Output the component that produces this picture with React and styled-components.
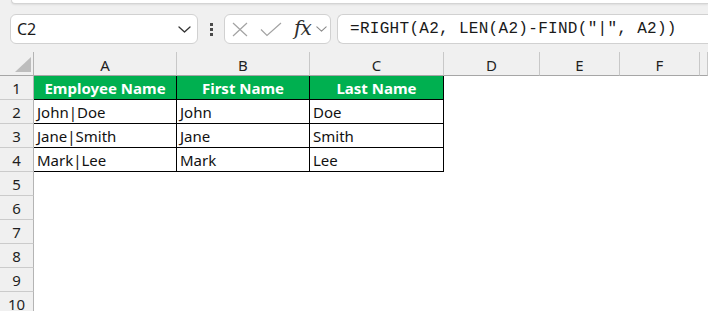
import React from 'react';
import styled, { createGlobalStyle } from 'styled-components';

const GlobalStyle = createGlobalStyle`
  html, body {
    margin: 0;
    padding: 0;
    background: #ffffff;
    overflow: hidden;
  }
  body {
    font-family: "Noto Sans", "Liberation Sans", sans-serif;
    color: #1f1f1f;
  }
`;

const Window = styled.div`
  width: 708px;
  height: 311px;
  overflow: hidden;
  display: flex;
  flex-direction: column;
  background: #ffffff;
`;

// Toolbar with name box and formula bar
const Toolbar = styled.div`
  height: 52px;
  flex-shrink: 0;
  background: #f0f0f0;
  display: flex;
  flex-direction: column;
`;

const RibbonEdge = styled.div`
  height: 3px;
  margin-left: 11px;
  background: #ffffff;
  border-left: 1px solid #d4d4d4;
  border-bottom: 1px solid #d4d4d4;
  border-bottom-left-radius: 6px;
  box-shadow: 0 1px 2px rgba(0, 0, 0, 0.08);
`;

const FormulaRow = styled.div`
  display: flex;
  align-items: center;
  height: 30px;
  margin-top: 10px;
  padding-left: 10px;
`;

const NameBox = styled.div`
  width: 188px;
  height: 30px;
  box-sizing: border-box;
  border: 1px solid #d1d1d1;
  border-radius: 6px;
  background: #ffffff;
  display: flex;
  align-items: center;
  justify-content: space-between;
  padding: 0 6px 0 6px;
  font-size: 16px;
  color: #1a1a1a;
`;

const Grip = styled.div`
  width: 26px;
  height: 30px;
  display: flex;
  flex-direction: column;
  align-items: center;
  justify-content: center;
  gap: 2px;
`;

const GripDot = styled.span`
  width: 3px;
  height: 3px;
  background: #4a4a4a;
`;

const FxGroup = styled.div`
  width: 107px;
  height: 30px;
  box-sizing: border-box;
  border: 1px solid #d1d1d1;
  border-radius: 6px;
  background: #ffffff;
  display: flex;
  align-items: center;
  padding-left: 6px;
`;

const FxLabel = styled.span`
  font-family: "DejaVu Serif", "Liberation Serif", serif;
  font-style: italic;
  font-size: 20px;
  color: #2e2e2e;
  margin-left: 12px;
  margin-right: 5px;
  line-height: 1;
  margin-top: -3px;
  letter-spacing: -1px;
`;

const FormulaInput = styled.div`
  flex: 1;
  height: 30px;
  margin-left: 6px;
  box-sizing: border-box;
  border: 1px solid #d1d1d1;
  border-right: none;
  border-radius: 6px 0 0 6px;
  background: #ffffff;
  display: flex;
  align-items: center;
  padding-left: 12px;
  font-family: "Liberation Mono", "DejaVu Sans Mono", monospace;
  font-size: 16px;
  letter-spacing: 0.3px;
  color: #1a1a1a;
  white-space: nowrap;
`;

// Sheet grid
const Sheet = styled.div`
  display: grid;
  grid-template-columns: 34px 143px 133px 134px 96px 80px 80px 1fr;
  grid-auto-rows: 24px;
`;

const Corner = styled.div`
  box-sizing: border-box;
  background: #f0f0f0;
  border-right: 1px solid #b4b4b4;
  border-bottom: 1px solid #a6a6a6;
  display: flex;
  justify-content: flex-end;
  align-items: flex-end;
  padding: 0 2px 3px 0;
`;

const ColHeader = styled.div`
  box-sizing: border-box;
  background: #f0f0f0;
  border-bottom: 1px solid #a6a6a6;
  border-right: 1px solid #c8c8c8;
  display: flex;
  align-items: center;
  justify-content: center;
  font-size: 15px;
  color: #1f1f1f;
  padding-top: 2px;
`;

const RowHeader = styled.div`
  box-sizing: border-box;
  background: #f0f0f0;
  border-right: 1px solid #b4b4b4;
  border-bottom: 1px solid #cbcbcb;
  display: flex;
  align-items: center;
  justify-content: center;
  font-size: 15px;
  color: #1f1f1f;
`;

const Cell = styled.div`
  box-sizing: border-box;
  display: flex;
  align-items: center;
  justify-content: ${(p) => (p.$head ? 'center' : 'flex-start')};
  padding-left: ${(p) => (p.$head ? '0' : '3px')};
  font-size: 15px;
  font-weight: ${(p) => (p.$head ? 700 : 400)};
  color: ${(p) => (p.$head ? '#ffffff' : '#111111')};
  background: ${(p) => (p.$head ? '#00b050' : '#ffffff')};
  border-right: ${(p) => (p.$boxed ? '1px solid #000000' : 'none')};
  border-bottom: ${(p) => (p.$boxed ? '1px solid #000000' : 'none')};
  white-space: nowrap;
  overflow: hidden;
`;

const Chevron = ({ size = 13, color = '#333' }) => (
  <svg width={size} height={Math.round(size / 2)} viewBox="0 0 13 7" fill="none">
    <path d="M1 1l5.5 5L12 1" stroke={color} strokeWidth="1.3" strokeLinecap="round" strokeLinejoin="round" />
  </svg>
);

const CancelIcon = () => (
  <svg width="18" height="15" viewBox="0 0 18 15" fill="none">
    <path d="M2 1l14 13M16 1L2 14" stroke="#a3a3a3" strokeWidth="1.2" />
  </svg>
);

const EnterIcon = () => (
  <svg width="22" height="15" viewBox="0 0 22 15" fill="none" style={{ marginLeft: 11 }}>
    <path d="M1 7.5l6 6L21 1" stroke="#a3a3a3" strokeWidth="1.2" />
  </svg>
);

const SelectAll = () => (
  <svg width="16" height="15" viewBox="0 0 16 15">
    <path d="M16 0V15H0Z" fill="#bdbdbd" />
  </svg>
);

const columns = ['A', 'B', 'C', 'D', 'E', 'F', ''];

const rows = [
  { head: true, cells: ['Employee Name', 'First Name', 'Last Name'] },
  { cells: ['John|Doe', 'John', 'Doe'] },
  { cells: ['Jane|Smith', 'Jane', 'Smith'] },
  { cells: ['Mark|Lee', 'Mark', 'Lee'] },
];

const App = () => {
  const allRows = Array.from({ length: 10 }, (_, i) => rows[i] || { cells: [] });

  return (
    <Window>
      <GlobalStyle />
      <Toolbar>
        <RibbonEdge />
        <FormulaRow>
          <NameBox>
            <span>C2</span>
            <Chevron />
          </NameBox>
          <Grip>
            <GripDot />
            <GripDot />
            <GripDot />
          </Grip>
          <FxGroup>
            <CancelIcon />
            <EnterIcon />
            <FxLabel>fx</FxLabel>
            <Chevron size={11} color="#8a8a8a" />
          </FxGroup>
          <FormulaInput>=RIGHT(A2, LEN(A2)-FIND("|", A2))</FormulaInput>
        </FormulaRow>
      </Toolbar>
      <Sheet>
        <Corner>
          <SelectAll />
        </Corner>
        {columns.map((c, i) => (
          <ColHeader key={`col-${i}`}>{c}</ColHeader>
        ))}
        {allRows.map((row, r) => {
          const inTable = r < rows.length;
          return (
            <React.Fragment key={`row-${r}`}>
              <RowHeader>{r + 1}</RowHeader>
              {columns.map((_, c) => (
                <Cell
                  key={`cell-${r}-${c}`}
                  $head={row.head && c < 3}
                  $boxed={inTable && c < 3}
                >
                  {row.cells[c] || ''}
                </Cell>
              ))}
            </React.Fragment>
          );
        })}
      </Sheet>
    </Window>
  );
};

export default App;
